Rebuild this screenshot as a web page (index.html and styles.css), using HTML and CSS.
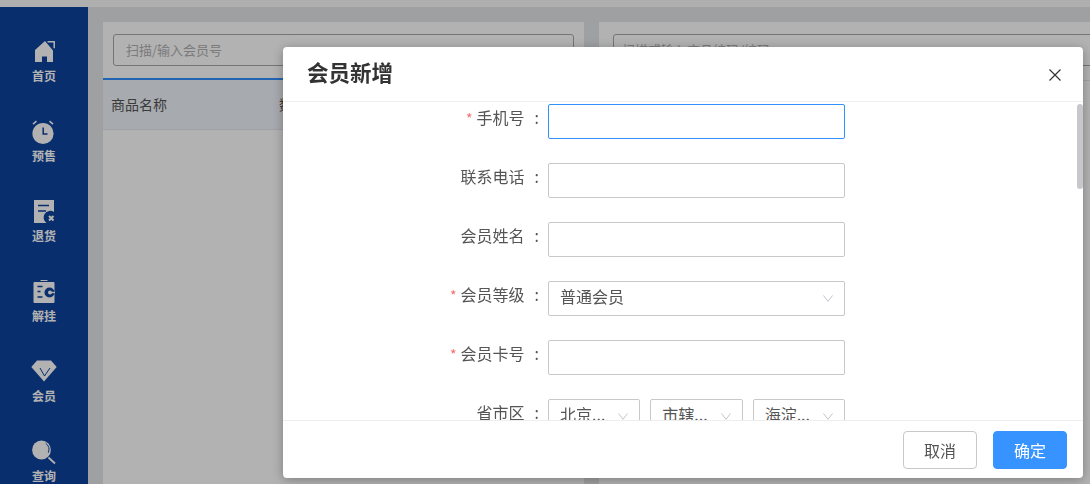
FILE: index.html
```html
<!DOCTYPE html>
<html lang="zh-CN">
<head>
  <meta charset="UTF-8" />
  <title>会员新增</title>
  <link rel="stylesheet" href="styles.css">
</head>
<body>

<div class="topbar"></div>

<div class="app">
  <div class="sidebar">
    <div class="nav-item">
      <svg class="nav-icon" viewBox="0 0 24 24"><path d="M13 1L3 10v12h7v-5.500h5V22h6V10.500z"/><path d="M15.500 1.700h6.700v6.500" class="bracket"/></svg>
      <span>首页</span>
    </div>
    <div class="nav-item">
      <svg class="nav-icon" viewBox="0 0 24 24"><circle cx="11" cy="13.500" r="10.600"/><path d="M11.200 7.500v6.500h4.300" class="cut"/><path d="M.5 3.500L4 .5l1 1.300L1.500 4.800zM21.500 3.500L18 .5l-1 1.300 3.500 3z"/></svg>
      <span>预售</span>
    </div>
    <div class="nav-item">
      <svg class="nav-icon" viewBox="0 0 24 24"><path d="M2 0h20v12a6.500 6.500 0 0 0-7.500 11H2z"/><path d="M6 5.500h11M6 11h8" class="cut"/><path d="M17 16l4.500 4.500M21.500 16L17 20.500" class="cross"/></svg>
      <span>退货</span>
    </div>
    <div class="nav-item">
      <svg class="nav-icon" viewBox="0 0 24 24"><path d="M8.500 0h7v1h-7z"/><path d="M2.500 2h19a1 1 0 0 1 1 1v19a1 1 0 0 1-1 1h-19a1 1 0 0 1-1-1V3a1 1 0 0 1 1-1z"/><path d="M5.500 6.500h5M5.500 11.500h3M5.500 17h5" class="cut"/><circle cx="17.500" cy="12.500" r="5" class="hole"/><circle cx="18" cy="12.500" r="2"/><path d="M18 11.800h5v1.400h-5z"/></svg>
      <span>解挂</span>
    </div>
    <div class="nav-item">
      <svg class="nav-icon" viewBox="0 0 24 24"><path d="M5 .5h14L24.700 7 12 21.500-.7 7z"/><path d="M8 8l4.500 8L18 8" class="thin"/></svg>
      <span>会员</span>
    </div>
    <div class="nav-item">
      <svg class="nav-icon" viewBox="0 0 24 24"><circle cx="9.500" cy="10" r="9.400"/><path d="M13.700 3.300a8 8 0 0 1 2.600 9.400" class="thin"/><path d="M16.500 17.500l6.500 6" class="handle"/></svg>
      <span>查询</span>
    </div>
  </div>

  <div class="main">
    <div class="panel panel-left">
      <div class="search-row">
        <div class="search-box">扫描/输入会员号</div>
      </div>
      <div class="table-head">
        <span class="col-name">商品名称</span>
        <span>数量</span>
      </div>
    </div>
    <div class="panel panel-right">
      <div class="search-row">
        <div class="search-box search-wide">扫描或输入商品编码/编码</div>
      </div>
      <div class="table-head"></div>
    </div>
  </div>
</div>

<div class="overlay"></div>

<div class="dialog">
  <div class="dialog-head">
    <h2>会员新增</h2>
    <svg class="close" viewBox="0 0 12 12"><path d="M.5.5l11 11M11.500.5l-11 11"/></svg>
  </div>

  <div class="dialog-body">
    <div class="form-row">
      <label class="required">手机号<span class="colon">:</span></label>
      <div class="field focus"></div>
    </div>
    <div class="form-row">
      <label>联系电话<span class="colon">:</span></label>
      <div class="field"></div>
    </div>
    <div class="form-row">
      <label>会员姓名<span class="colon">:</span></label>
      <div class="field"></div>
    </div>
    <div class="form-row">
      <label class="required">会员等级<span class="colon">:</span></label>
      <div class="field select">
        <span>普通会员</span>
        <svg class="arrow" viewBox="0 0 10 7"><path d="M.5.5L5 6.300 9.500.5"/></svg>
      </div>
    </div>
    <div class="form-row">
      <label class="required">会员卡号<span class="colon">:</span></label>
      <div class="field"></div>
    </div>
    <div class="form-row">
      <label>省市区<span class="colon">:</span></label>
      <div class="field-group">
        <div class="field select"><span>北京...</span><svg class="arrow" viewBox="0 0 10 7"><path d="M.5.5L5 6.300 9.500.5"/></svg></div>
        <div class="field select"><span>市辖...</span><svg class="arrow" viewBox="0 0 10 7"><path d="M.5.5L5 6.300 9.500.5"/></svg></div>
        <div class="field select"><span>海淀...</span><svg class="arrow" viewBox="0 0 10 7"><path d="M.5.5L5 6.300 9.500.5"/></svg></div>
      </div>
    </div>
    <div class="scroll-thumb"></div>
  </div>

  <div class="dialog-foot">
    <button class="btn">取消</button>
    <button class="btn btn-primary">确定</button>
  </div>
</div>

</body>
</html>
```

FILE: styles.css
```css
* {
  box-sizing: border-box;
}
html, body {
  margin: 0;
  height: 100%;
  overflow: hidden;
}
body {
  font-family: "Noto Sans CJK SC", "Liberation Sans", sans-serif;
  background-color: #fbfbfb;
  color: #333;
}
.topbar {
  height: 7px;
}
.app {
  display: flex;
  height: 477px;
  overflow: hidden;
  background-color: #e4e6e9;
}

/* sidebar */
.sidebar {
  width: 88px;
  flex-shrink: 0;
  overflow: hidden;
  background-color: #0e429d;
  padding-top: 33px;
}
.nav-item {
  height: 80px;
  display: flex;
  flex-direction: column;
  align-items: center;
  color: #fff;
  font-size: 12px;
  font-weight: 700;
  line-height: 16px;
}
.nav-item span {
  margin-top: 4px;
}
.nav-icon {
  width: 24px;
  height: 24px;
  flex-shrink: 0;
  overflow: visible;
  fill: #fff;
}
.nav-icon .cut {
  fill: none;
  stroke: #0e429d;
  stroke-width: 1.500;
}
.nav-icon .hole {
  fill: #0e429d;
}
.nav-icon .thin {
  fill: none;
  stroke: #0e429d;
  stroke-width: 1;
}
.nav-icon .bracket {
  fill: none;
  stroke: #fff;
  stroke-width: 1.500;
}
.nav-icon .cross {
  fill: none;
  stroke: #fff;
  stroke-width: 2;
}
.nav-icon .handle {
  fill: none;
  stroke: #fff;
  stroke-width: 1.800;
}

/* main */
.main {
  flex: 1;
  min-width: 0;
  display: flex;
  gap: 15px;
  padding: 15px 0 0 15px;
  overflow: hidden;
}
.panel {
  background-color: #fff;
  flex-shrink: 0;
}
.panel-left {
  width: 481px;
}
.panel-right {
  width: 520px;
}
.search-row {
  height: 58px;
  padding: 12px 10px 0;
  border-bottom: 2px solid #3091ff;
}
.search-box {
  height: 32px;
  border: 1px solid #a8a8a8;
  border-radius: 3px;
  padding: 0 12px;
  font-size: 13px;
  line-height: 29px;
  color: #b0b0b0;
}
.panel-right .search-row {
  border-bottom: 0;
}
.search-wide {
  padding-left: 8px;
  margin-left: 4px;
  width: 560px;
}
.panel-right .table-head {
  height: 1px;
  padding: 0;
  background-color: #dcdfe6;
}
.table-head {
  height: 50px;
  display: flex;
  align-items: center;
  padding: 0 0 2px 8px;
  background-color: #f0f4fb;
  border-bottom: 1px solid #e4e7ed;
  font-size: 14px;
  color: #555;
}
.col-name {
  width: 168px;
}

/* dialog */
.overlay {
  position: fixed;
  inset: 0;
  background-color: rgba(0, 0, 0, 0.3);
}
.dialog {
  position: fixed;
  left: 283px;
  top: 47px;
  width: 800px;
  height: 431px;
  background-color: #fff;
  border-radius: 4px;
  box-shadow: 0 2px 12px rgba(0, 0, 0, 0.3);
  display: flex;
  flex-direction: column;
  overflow: hidden;
}
.dialog-head {
  height: 55px;
  flex-shrink: 0;
  display: flex;
  align-items: center;
  justify-content: space-between;
  padding: 0 22px 0 24px;
  border-bottom: 1px solid #eeeeee;
}
.dialog-head h2 {
  margin: 0 0 6px;
  font-size: 21.500px;
  font-weight: 700;
  color: #333;
}
.close {
  width: 12px;
  height: 12px;
  margin-top: 1px;
  fill: none;
  stroke: #333;
  stroke-width: 1.200;
}
.dialog-body {
  position: relative;
  flex: 1;
  min-height: 0;
  overflow: hidden;
  padding-top: 2px;
}
.form-row {
  display: flex;
  height: 35px;
  margin-bottom: 24px;
}
.form-row label {
  width: 265px;
  padding-right: 9px;
  text-align: right;
  font-size: 16px;
  line-height: 26px;
  color: #555;
  white-space: nowrap;
}
.colon {
  margin-left: 10px;
}
.required::before {
  content: "*";
  color: #f56c6c;
  font-size: 14px;
  margin-right: 4px;
}
.field {
  width: 297px;
  height: 35px;
  border: 1px solid #c8c8c8;
  border-radius: 2px;
  background-color: #fff;
}
.field.focus {
  border-color: #3091ff;
}
.select {
  display: flex;
  align-items: center;
  justify-content: space-between;
  padding: 0 11px;
  font-size: 16px;
  color: #555;
}
.select span {
  margin-bottom: 6px;
  white-space: nowrap;
}
.arrow {
  width: 10px;
  height: 7px;
  flex-shrink: 0;
  fill: none;
  stroke: #c0c4cc;
  stroke-width: 1;
}
.field-group {
  width: 297px;
  display: flex;
  gap: 10px;
}
.field-group .field {
  flex: 1;
  width: auto;
  min-width: 0;
}
.scroll-thumb {
  position: absolute;
  right: 0;
  top: 2px;
  width: 6px;
  height: 85px;
  border-radius: 3px;
  background-color: #c8c8cc;
}
.dialog-foot {
  height: 58px;
  flex-shrink: 0;
  display: flex;
  justify-content: flex-end;
  align-items: flex-start;
  gap: 16px;
  padding: 10px 16px 0 0;
  border-top: 1px solid #eeeeee;
}
.btn {
  width: 74px;
  height: 38px;
  border: 1px solid #c8c8c8;
  border-radius: 4px;
  background-color: #fff;
  font-family: inherit;
  font-size: 16px;
  color: #555;
}
.btn-primary {
  border-color: #3693ff;
  background-color: #3693ff;
  color: #fff;
}
```
